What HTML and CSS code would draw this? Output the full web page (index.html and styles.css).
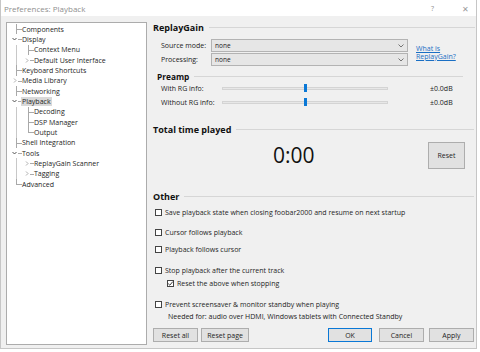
FILE: index.html
```html
<!DOCTYPE html>
<html>
<head>
<meta charset="utf-8">
<title>Preferences: Playback</title>
<link rel="stylesheet" href="styles.css">
</head>
<body>
<div class="window">
  <div class="titlebar">
    <span class="title">Preferences: Playback</span>
    <span class="help">?</span>
    <span class="close">✕</span>
  </div>
  <div class="main">
    <div class="tree">
      <div class="row"><i class="c t"></i><span class="lbl">Components</span></div>
      <div class="row"><i class="c x"><svg viewBox="0 0 5 4" class="arr dn"><polyline points="0.5,1 2.5,3 4.5,1"/></svg></i><span class="lbl">Display</span></div>
      <div class="row"><i class="c v"></i><i class="c t"></i><span class="lbl">Context Menu</span></div>
      <div class="row"><i class="c v"></i><i class="c x"><svg viewBox="0 0 4 5" class="arr rt"><polyline points="1,0.5 3,2.5 1,4.5"/></svg></i><span class="lbl">Default User Interface</span></div>
      <div class="row"><i class="c t"></i><span class="lbl">Keyboard Shortcuts</span></div>
      <div class="row"><i class="c x"><svg viewBox="0 0 4 5" class="arr rt"><polyline points="1,0.5 3,2.5 1,4.5"/></svg></i><span class="lbl">Media Library</span></div>
      <div class="row"><i class="c t"></i><span class="lbl">Networking</span></div>
      <div class="row"><i class="c x"><svg viewBox="0 0 5 4" class="arr dn"><polyline points="0.5,1 2.5,3 4.5,1"/></svg></i><span class="lbl sel">Playback</span></div>
      <div class="row"><i class="c v"></i><i class="c t"></i><span class="lbl">Decoding</span></div>
      <div class="row"><i class="c v"></i><i class="c t"></i><span class="lbl">DSP Manager</span></div>
      <div class="row"><i class="c v"></i><i class="c l"></i><span class="lbl">Output</span></div>
      <div class="row"><i class="c t"></i><span class="lbl">Shell Integration</span></div>
      <div class="row"><i class="c x"><svg viewBox="0 0 5 4" class="arr dn"><polyline points="0.5,1 2.5,3 4.5,1"/></svg></i><span class="lbl">Tools</span></div>
      <div class="row"><i class="c v"></i><i class="c x"><svg viewBox="0 0 4 5" class="arr rt"><polyline points="1,0.5 3,2.5 1,4.5"/></svg></i><span class="lbl">ReplayGain Scanner</span></div>
      <div class="row"><i class="c v"></i><i class="c x"><svg viewBox="0 0 4 5" class="arr rt"><polyline points="1,0.5 3,2.5 1,4.5"/></svg></i><span class="lbl">Tagging</span></div>
      <div class="row"><i class="c l"></i><span class="lbl">Advanced</span></div>
    </div>
    <div class="pane">
      <div class="heading h-rg"><span>ReplayGain</span><i class="rule"></i></div>
      <div class="rg-grid">
        <span class="flabel">Source mode:</span>
        <div class="combo">none<svg viewBox="0 0 6 4" class="chev"><polyline points="0.5,0.5 3,3 5.5,0.5"/></svg></div>
        <a class="link">What is<br>ReplayGain?</a>
        <span class="flabel">Processing:</span>
        <div class="combo">none<svg viewBox="0 0 6 4" class="chev"><polyline points="0.5,0.5 3,3 5.5,0.5"/></svg></div>
      </div>
      <div class="heading h-pre"><span>Preamp</span><i class="rule"></i></div>
      <div class="srow"><span class="slabel">With RG info:</span><div class="track"><i class="thumb"></i></div><span class="sval">±0.0dB</span></div>
      <div class="srow"><span class="slabel">Without RG info:</span><div class="track"><i class="thumb"></i></div><span class="sval">±0.0dB</span></div>
      <div class="heading h-tt"><span>Total time played</span><i class="rule"></i></div>
      <div class="timer"><span class="time">0:00</span><button class="btn reset">Reset</button></div>
      <div class="heading h-other"><span>Other</span><i class="rule"></i></div>
      <div class="check c1"><i class="box"></i><span>Save playback state when closing foobar2000 and resume on next startup</span></div>
      <div class="check c2"><i class="box"></i><span>Cursor follows playback</span></div>
      <div class="check c3"><i class="box"></i><span>Playback follows cursor</span></div>
      <div class="check c4"><i class="box"></i><span>Stop playback after the current track</span></div>
      <div class="check c5 sub"><i class="box"><svg viewBox="0 0 7 7" class="tick"><polyline points="1.2,3.6 2.8,5.2 5.8,1.6"/></svg></i><span>Reset the above when stopping</span></div>
      <div class="check c6"><i class="box"></i><span>Prevent screensaver &amp; monitor standby when playing</span></div>
      <div class="note">Needed for: audio over HDMI, Windows tablets with Connected Standby</div>
      <div class="buttons">
        <button class="btn b-all">Reset all</button>
        <button class="btn b-page">Reset page</button>
        <button class="btn b-ok">OK</button>
        <button class="btn b-cancel">Cancel</button>
        <button class="btn b-apply">Apply</button>
      </div>
    </div>
  </div>
</div>
</body>
</html>
```

FILE: styles.css
```css
* { box-sizing: border-box; margin: 0; padding: 0; }
html, body { width: 480px; height: 352px; overflow: hidden; background: #ffffff; }
body { font-family: "Open Sans", "Noto Sans", sans-serif; font-size: 7px; color: #1e1e1e; }

.window {
  width: 477px; height: 349px; background: #f0f0f0;
  border: 1px solid #c6c6c6; border-top: none;
  display: flex; flex-direction: column;
}
.titlebar {
  height: 16px; background: #ffffff; display: flex; align-items: center;
  padding-left: 3px; flex: none;
}
.title { font-size: 8px; color: #8f8f8f; flex: 1; }
.help { font-size: 7px; color: #8f8f8f; width: 31px; }
.close { font-size: 8px; color: #9a9a9a; width: 14px; }

.main { flex: 1; display: flex; padding: 6px 0 0 5px; }

.tree {
  width: 141px; height: 323px; background: #ffffff; border: 1px solid #acacac;
  padding: 1px 0 0 3px; flex: none;
}
.row { height: 10.33px; display: flex; align-items: center; line-height: 10px; white-space: nowrap; }
.c { display: block; width: 12px; height: 100%; flex: none; }
.c.t {
  background:
    linear-gradient(#a9a9a9, #a9a9a9) 6px 0 / 1px 100% no-repeat,
    linear-gradient(#a9a9a9, #a9a9a9) 6px 5px / 6px 1px no-repeat;
}
.c.l {
  background:
    linear-gradient(#a9a9a9, #a9a9a9) 6px 0 / 1px 5px no-repeat,
    linear-gradient(#a9a9a9, #a9a9a9) 6px 5px / 6px 1px no-repeat;
}
.c.v { background: linear-gradient(#c8c8c8, #c8c8c8) 6px 0 / 1px 100% no-repeat; }
.c.x {
  display: flex; align-items: center;
  background: linear-gradient(#a9a9a9, #a9a9a9) 8px 5px / 4px 1px no-repeat;
}
.arr { fill: none; stroke-width: 0.9; }
.arr.dn { width: 5px; height: 4px; margin-left: 2px; stroke: #444; }
.arr.rt { width: 4px; height: 5px; margin-left: 3px; stroke: #a6a6a6; }
.lbl { padding: 0 1px; margin-left: -1px; line-height: 9px; color: #1e1e1e; }
.lbl.sel { background: #d9d9d9; }

.pane { width: 322px; margin-left: 6px; display: flex; flex-direction: column; }

.heading { display: flex; align-items: center; height: 10px; font-weight: bold; font-size: 9px; color: #111; }
.heading span { white-space: nowrap; }
.rule { display: block; flex: 1; height: 1px; background: #d6d6d6; margin-left: 5px; }
.h-pre { font-size: 8.3px; padding-left: 4px; margin-top: 5px; margin-right: 12px; }
.h-tt { margin-top: 15px; margin-right: 1px; }
.h-other { margin-top: 22px; margin-right: 1px; }

.rg-grid {
  display: grid; grid-template-columns: 50px 197px auto; grid-template-rows: 13px 13px;
  row-gap: 1px; padding-left: 8px; margin-top: 7px; align-items: center;
}
.flabel { color: #222; }
.combo {
  height: 13px; background: #e6e6e6; border: 1px solid #b3b3b3; display: flex; align-items: center;
  padding-left: 3px; font-size: 6.5px; color: #222;
}
.chev { width: 6px; height: 4px; margin-left: auto; margin-right: 3px; fill: none; stroke: #666; stroke-width: 0.9; }
.link {
  grid-column: 3; grid-row: 1 / 3; margin-left: 8px; color: #1a6fc4; text-decoration: underline;
  line-height: 8px; font-size: 7px; align-self: center;
}

.srow { display: flex; align-items: center; height: 14px; padding-left: 8px; }
.slabel { width: 61px; flex: none; color: #222; }
.track { width: 166px; height: 3px; background: #e7e7e7; border: 1px solid #d4d4d4; display: flex; align-items: center; padding-left: 81px; }
.thumb { display: block; width: 3px; height: 8px; background: #0a78d6; flex: none; }
.sval { margin-left: 42px; color: #222; }

.timer { display: flex; align-items: center; height: 27px; margin-top: 8px; }
.time { font-size: 21px; margin-left: 120px; color: #111; line-height: 27px; }
.btn {
  font-family: inherit; font-size: 7px; color: #1e1e1e; background: #e1e1e1; border: 1px solid #adadad;
  display: flex; align-items: center; justify-content: center;
}
.reset { width: 37px; height: 27px; margin-left: auto; margin-right: 10px; }

.check { display: flex; align-items: center; height: 10px; }
.box { display: block; width: 7px; height: 7px; border: 1px solid #444; background: #fff; margin-left: 2px; margin-right: 3px; flex: none; }
.tick { display: block; width: 7px; height: 7px; margin: -1px; fill: none; stroke: #222; stroke-width: 0.9; }
.c1 { margin-top: 6px; }
.c2 { margin-top: 10px; }
.c3 { margin-top: 7px; }
.c4 { margin-top: 11px; }
.c5 { margin-top: 3px; }
.sub .box { margin-left: 14px; }
.c6 { margin-top: 11px; }
.note { height: 10px; line-height: 10px; margin-top: 3px; padding-left: 15px; color: #222; }

.buttons { display: flex; margin-top: 6px; height: 14px; }
.buttons .btn { height: 14px; }
.b-all { width: 45px; }
.b-page { width: 48px; margin-left: 3px; }
.b-ok { width: 44px; margin-left: auto; border-color: #0a78d6; }
.b-cancel { width: 45px; margin-left: 7px; }
.b-apply { width: 45px; margin-left: 5px; margin-right: 1px; }
```
